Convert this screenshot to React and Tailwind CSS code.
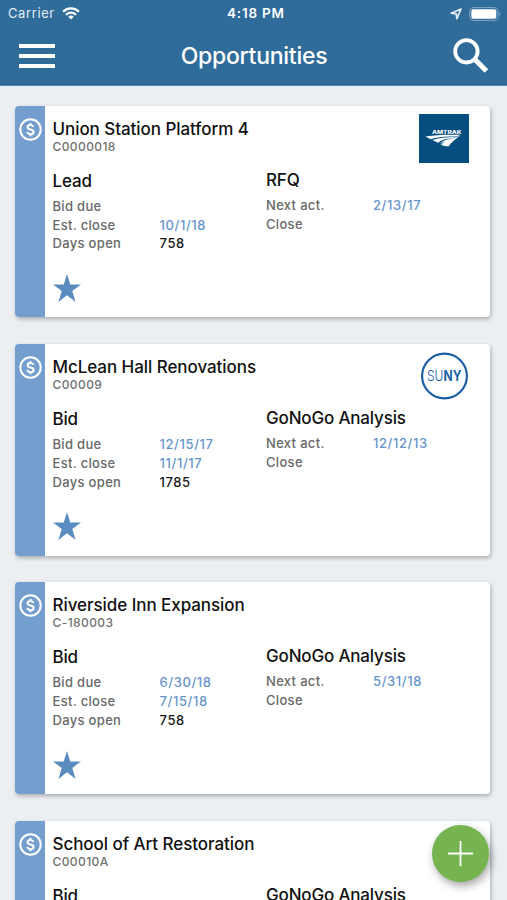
import React from 'react';

const opportunities = [
  {
    name: 'Union Station Platform 4',
    code: 'C0000018',
    stage: 'Lead',
    bidDue: '',
    estClose: '10/1/18',
    daysOpen: '758',
    step: 'RFQ',
    nextAct: '2/13/17',
    logo: 'amtrak',
  },
  {
    name: 'McLean Hall Renovations',
    code: 'C00009',
    stage: 'Bid',
    bidDue: '12/15/17',
    estClose: '11/1/17',
    daysOpen: '1785',
    step: 'GoNoGo Analysis',
    nextAct: '12/12/13',
    logo: 'suny',
  },
  {
    name: 'Riverside Inn Expansion',
    code: 'C-180003',
    stage: 'Bid',
    bidDue: '6/30/18',
    estClose: '7/15/18',
    daysOpen: '758',
    step: 'GoNoGo Analysis',
    nextAct: '5/31/18',
  },
  {
    name: 'School of Art Restoration',
    code: 'C00010A',
    stage: 'Bid',
    step: 'GoNoGo Analysis',
  },
];

const StatusBar = () => (
  <div className="relative flex h-[27px] items-center justify-between pl-2 pr-[6px] text-[13px] leading-none text-[#e3edf5]">
    <div className="flex items-center gap-[7px]">
      <span className="tracking-[0.6px]">Carrier</span>
      <svg className="h-[13px] w-[18px]" viewBox="0 0 18 13" fill="none" stroke="#fff" strokeWidth="2.3">
        <path d="M1.1 4.7a11.2 11.2 0 0 1 15.8 0" />
        <path d="M4 7.7a7.1 7.1 0 0 1 10 0" />
        <path d="M9 12.6 6.3 9.8a3.8 3.8 0 0 1 5.4 0Z" fill="#fff" stroke="none" />
      </svg>
    </div>
    <span className="absolute left-[227px] text-[13.5px] font-semibold tracking-[0.8px] text-white">4:18 PM</span>
    <div className="flex items-center gap-[7px]">
      <svg className="h-[12px] w-[12px]" viewBox="0 0 12 12" fill="none" stroke="#e3edf5" strokeWidth="1.7" strokeLinejoin="round">
        <path d="M11 1 6.9 10.7 6.2 5.9 1.2 5.2Z" />
      </svg>
      <svg className="h-[14px] w-[32px]" viewBox="0 0 32 14">
        <rect x="0.6" y="0.6" width="28.4" height="12.8" rx="3.6" fill="none" stroke="#7fa6c5" />
        <rect x="2.3" y="2.3" width="25" height="9.4" rx="2" fill="#fff" />
        <path d="M30.4 4.8q2.2 2.2 0 4.4Z" fill="#7fa6c5" />
      </svg>
    </div>
  </div>
);

const Header = () => (
  <header className="h-[86px] shrink-0 border-b border-[#5389b1] bg-[#2f6c9a]">
    <StatusBar />
    <div className="flex h-[58px] items-center justify-between pl-[19px] pr-[18px]">
      <button className="flex w-[36px] flex-col gap-[5.5px]">
        <span className="h-[4.2px] bg-white" />
        <span className="h-[4.2px] bg-white" />
        <span className="h-[4.2px] bg-white" />
      </button>
      <h1 className="text-[23px] leading-none font-medium tracking-[-0.26px] text-white">Opportunities</h1>
      <button className="-mt-[2px]">
        <svg className="h-[35px] w-[36px]" viewBox="0 0 36 35" fill="none" stroke="#fff">
          <circle cx="13.4" cy="13.3" r="11.2" strokeWidth="3.8" />
          <path d="m22 21.4 11.4 11.6" strokeWidth="5" />
        </svg>
      </button>
    </div>
  </header>
);

const DollarIcon = () => (
  <svg className="h-[23px] w-[23px]" viewBox="0 0 23 23" fill="none" stroke="#fff">
    <circle cx="11.5" cy="11.5" r="10.2" strokeWidth="2" />
    <path
      d="M14.4 8.9C14 7.6 13 7 11.5 7 9.8 7 8.6 7.8 8.6 9.2c0 3 6 1.5 6 4.7 0 1.5-1.4 2.3-3.1 2.3-1.700 0-2.900-.8-3.200-2.300M11.500 5v2.200M11.500 16v2.200"
      strokeWidth="2"
    />
  </svg>
);

const StarIcon = () => (
  <svg className="h-[28px] w-[28px]" viewBox="0 0 28 28" fill="#5a8cc0">
    <path d="M14 0 17.3 10.4H28L19.3 17 22.6 28 14 21.3 5.4 28 8.7 17 0 10.4H10.7Z" />
  </svg>
);

const AmtrakLogo = () => (
  <svg className="h-[49px] w-[50px]" viewBox="0 0 50 49">
    <rect width="50" height="49" fill="#054f80" />
    <text
      x="13"
      y="19.6"
      fill="#fff"
      fontSize="4.2"
      fontWeight="800"
      textLength="29.5"
      lengthAdjust="spacingAndGlyphs"
    >
      AMTRAK
    </text>
    <g fill="#fff">
      <path d="M6.5 22.4C17 20.6 29 20.4 42 20.8L37 22.6C27 22 19 22.6 11.5 25.2Z" />
      <path d="M13.5 26C21 23.4 29 22.8 36.3 22.9L33 24.6C28 24.3 23 25.7 19 28.7Z" />
      <path d="M20.5 29.400C25 26 29 25 34.300 24.500L27 31.200 21.500 30.500 26.500 27.300Z" />
      <path d="M35 24 41.500 21.200C37 24.500 32.500 28 29.500 32.500L23 31.400C26.500 28 30.500 25.500 35 24Z" />
    </g>
  </svg>
);

const SunyLogo = () => (
  <svg className="h-[48px] w-[48px]" viewBox="0 0 48 48" fill="#1b5fa5">
    <circle cx="23.5" cy="24" r="22.4" fill="#fff" stroke="#1b5fa5" strokeWidth="2.2" />
    <text x="6" y="29.3" fontSize="15" fontWeight="300" textLength="34.5" lengthAdjust="spacingAndGlyphs">
      SU<tspan fontWeight="700">NY</tspan>
    </text>
  </svg>
);

const Row = ({ label, value, dark }) => (
  <div className="flex h-[18.9px] items-center text-[13px] font-medium">
    <span className="w-[107px] tracking-[0.32px] text-[#686868]">{label}</span>
    <span className={dark ? 'tracking-[0.6px] text-[#171717]' : 'tracking-[0.6px] text-[#6595cb]'}>{value}</span>
  </div>
);

const OpportunityCard = ({ item }) => (
  <article className="flex h-[211.5px] shrink-0 overflow-hidden rounded-[4px] bg-white shadow-[1px_2px_4px_rgba(0,0,0,0.28)]">
    <div className="flex w-[30px] shrink-0 justify-center bg-[#739ecd] pt-[12px]">
      <DollarIcon />
    </div>
    <div className="relative flex-1 pl-[7.5px]">
      <h2 className="pt-[12px] text-[17px] leading-[22px] font-medium tracking-[-0.06px] text-[#111]">{item.name}</h2>
      <p className="text-[12px] leading-[14px] font-medium tracking-[0.4px] text-[#707070]">{item.code}</p>
      <div className="mt-[16px] flex">
        <div className="w-[213.5px]">
          <h3 className="mb-[5px] text-[17px] leading-[22px] font-medium tracking-[-0.17px] text-[#111]">{item.stage}</h3>
          <Row label="Bid due" value={item.bidDue} />
          <Row label="Est. close" value={item.estClose} />
          <Row label="Days open" value={item.daysOpen} dark />
        </div>
        <div className="-mt-px">
          <h3 className="mb-[5px] text-[17px] leading-[22px] font-medium tracking-[-0.17px] text-[#111]">{item.step}</h3>
          <Row label="Next act." value={item.nextAct} />
          <Row label="Close" value="" />
        </div>
      </div>
      <div className="mt-[20.5px]">
        <StarIcon />
      </div>
      <div className="absolute top-[7.8px] right-[21px]">
        {item.logo === 'amtrak' && <AmtrakLogo />}
        {item.logo === 'suny' && <SunyLogo />}
      </div>
    </div>
  </article>
);

export default function App() {
  return (
    <div className="relative flex h-[900px] w-[507px] flex-col overflow-hidden bg-[#ebeff2] font-['Inter',sans-serif]">
      <Header />
      <main className="flex min-h-0 flex-1 flex-col gap-[26.75px] overflow-hidden pt-[19.95px] pr-[17px] pl-[15px]">
        {opportunities.map((item) => (
          <OpportunityCard key={item.code} item={item} />
        ))}
      </main>
      <button className="absolute top-[825px] left-[432px] flex h-[57px] w-[57px] items-center justify-center rounded-full bg-[#75b44f] shadow-[2px_4px_8px_rgba(0,0,0,0.35)]">
        <svg className="h-[25px] w-[25px]" viewBox="0 0 25 25" stroke="#fff" strokeWidth="1.8">
          <path d="M12.5 0v25M0 12.5h25" />
        </svg>
      </button>
    </div>
  );
}
